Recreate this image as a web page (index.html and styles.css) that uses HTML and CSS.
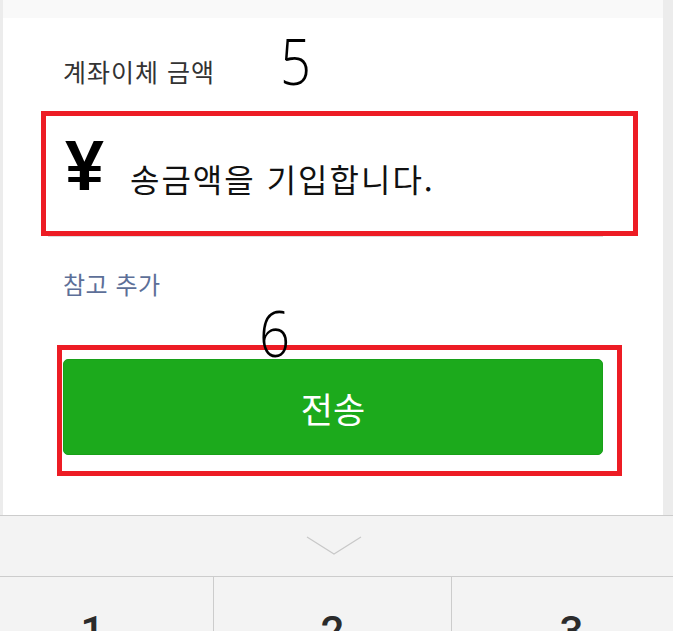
FILE: index.html
```html
<!DOCTYPE html>
<html lang="ko">
<head>
    <meta charset="UTF-8">
    <meta name="viewport" content="width=device-width, initial-scale=1.0">
    <title>계좌이체</title>
    <link rel="stylesheet" href="styles.css">
</head>
<body>
    <div class="screen">
        <div class="topbar"></div>

        <div class="field-label">계좌이체 금액</div>
        <span class="step step-5">5</span>

        <div class="amount-box">
            <span class="currency">¥</span>
            <span class="placeholder">송금액을 기입합니다.</span>
        </div>
        <div class="input-line"></div>

        <div class="add-note">참고 추가</div>

        <span class="step step-6">6</span>
        <div class="send-box">
            <button class="send-btn">전송</button>
        </div>
    </div>

    <div class="keyboard">
        <div class="kb-toggle">
            <svg width="56" height="20" viewBox="0 0 56 20">
                <polyline points="1,1 28,18 55,1" fill="none" stroke="#c8c8c8" stroke-width="1.2"/>
            </svg>
        </div>
        <div class="keys">
            <div class="key key-1">1</div>
            <div class="key">2</div>
            <div class="key key-3">3</div>
        </div>
    </div>
</body>
</html>
```

FILE: styles.css
```css
body {
    margin: 0;
    background-color: #ececec;
    font-family: "Noto Sans CJK KR", "Noto Sans", sans-serif;
    overflow: hidden;
}
.screen {
    position: relative;
    margin: 0 10px 0 3px;
    height: 515px;
    background: #ffffff;
    display: flex;
    flex-direction: column;
    align-items: flex-start;
}
.topbar {
    align-self: stretch;
    height: 18px;
    background: #f9f9f9;
}
.field-label {
    margin: 38px 0 0 60px;
    font-size: 25px;
    letter-spacing: 1px;
    line-height: 30px;
    color: #333;
}
.step {
    position: absolute;
    font-family: "Open Sans", "DejaVu Sans", sans-serif;
    font-weight: 300;
    font-size: 64px;
    line-height: 1;
    color: #000;
    transform: scaleX(0.85);
    transform-origin: left top;
}
.step-5 {
    left: 277px;
    top: 29px;
}
.step-6 {
    left: 256px;
    top: 301px;
    z-index: 2;
}
.amount-box {
    margin: 25px 0 0 38px;
    width: 597px;
    height: 125px;
    box-sizing: border-box;
    border: 5px solid #ed1c24;
    display: flex;
    align-items: flex-start;
    padding: 15px 0 0 19px;
}
.currency {
    font-family: "Liberation Sans", Arial, sans-serif;
    font-weight: bold;
    font-size: 70px;
    line-height: 1;
    color: #000;
}
.placeholder {
    margin: 27px 0 0 26px;
    font-size: 32px;
    letter-spacing: 2px;
    line-height: 40px;
    color: #111;
}
.input-line {
    margin-left: 45px;
    width: 555px;
    height: 1px;
    background: #dddddd;
}
.add-note {
    margin: 32px 0 0 60px;
    font-size: 24px;
    letter-spacing: 0.5px;
    line-height: 30px;
    color: #5d6f98;
}
.send-box {
    margin: 46px 0 0 54px;
    width: 565px;
    height: 131px;
    box-sizing: border-box;
    border: 5px solid #ed1c24;
    padding: 9px 14px 16px 1px;
}
.send-btn {
    display: block;
    width: 100%;
    height: 96px;
    border: 1px solid #18a018;
    border-radius: 5px;
    background: #1caa1c;
    color: #fff;
    font-family: "Noto Sans CJK KR", sans-serif;
    font-size: 35px;
}
.keyboard {
    border-top: 1px solid #cccccc;
    background: #f3f3f3;
}
.kb-toggle {
    height: 60px;
    display: flex;
    justify-content: center;
    align-items: center;
    padding-right: 6px;
}
.keys {
    display: grid;
    grid-template-columns: 213px 238px 1fr;
    border-top: 1px solid #cccccc;
    height: 80px;
}
.key {
    padding-top: 34px;
    text-align: center;
    font-family: Roboto, sans-serif;
    font-weight: 500;
    font-size: 42px;
    line-height: 1;
    color: #2b2b2b;
}
.key-1 {
    padding-right: 28px;
}
.key-3 {
    padding-left: 18px;
}
.key + .key {
    border-left: 1px solid #cccccc;
}
```
